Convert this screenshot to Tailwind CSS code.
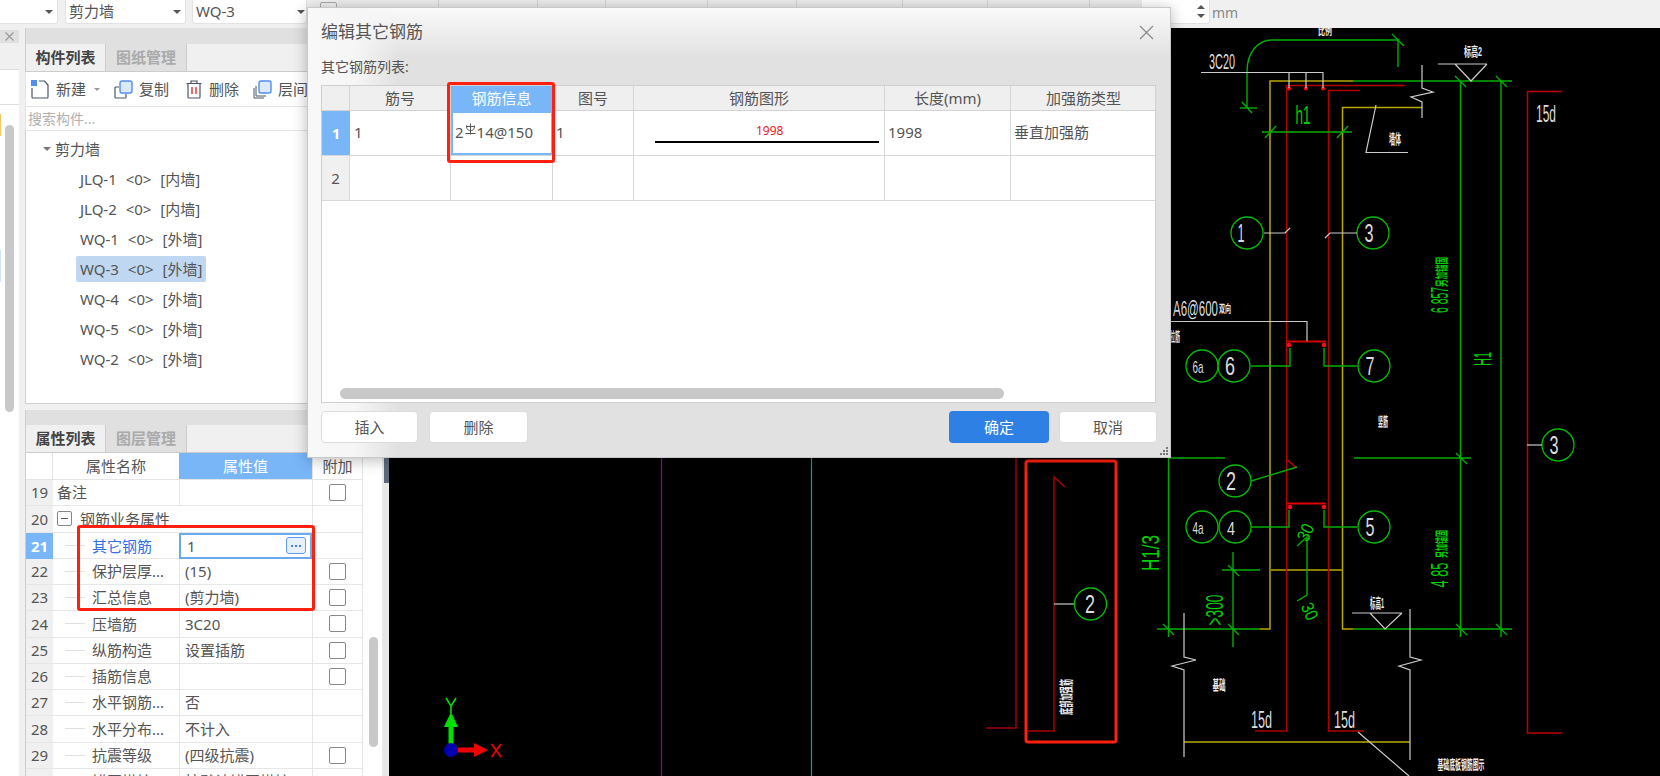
<!DOCTYPE html>
<html lang="zh">
<head>
<meta charset="UTF-8">
<title>编辑其它钢筋</title>
<script src="https://cdn.jsdelivr.net/npm/@tailwindcss/browser@4"></script>
</head>
<body class="bg-[#f0f0f0]">
<div class="relative w-[1660px] h-[776px] overflow-hidden flex flex-col bg-[#f0f0f0] text-[15px] text-[#555] font-['Noto_Sans','Noto_Sans_CJK_SC',sans-serif]">

  <!-- top bar -->
  <div class="h-[28px] shrink-0 flex items-start bg-[#f0f0f0]">
    <div class="w-[58px] h-[24px] bg-white rounded-br-[4px] border-r border-b border-[#e2e2e2] flex items-center justify-end pr-[4px]">
      <span class="w-0 h-0 border-x-[4px] border-x-transparent border-t-[4px] border-t-[#555]"></span>
    </div>
    <div class="ml-[7px] w-[121px] h-[24px] bg-white rounded-b-[4px] border border-t-0 border-[#e2e2e2] flex items-center justify-between pl-[3px] pr-[4px]">
      <span>剪力墙</span>
      <span class="w-0 h-0 border-x-[4px] border-x-transparent border-t-[4px] border-t-[#555]"></span>
    </div>
    <div class="ml-[6px] w-[115px] h-[24px] bg-white rounded-b-[4px] border border-t-0 border-[#e2e2e2] flex items-center justify-between pl-[3px] pr-[1px]">
      <span>WQ-3</span>
      <span class="w-0 h-0 border-x-[4px] border-x-transparent border-t-[4px] border-t-[#555]"></span>
    </div>
    <div class="ml-[13px] w-[17px] h-[10px] mt-[2px] border border-[#aaa] rounded-[2px]"></div>
    <div class="ml-[1px] w-[101px] h-[24px] bg-[#ececec] border-r border-[#d4d4d4]"></div>
    <div class="w-[99px] h-[24px] bg-[#ececec] border-r border-[#d4d4d4]"></div>
    <div class="w-[68px] h-[24px] bg-[#ececec] border-r border-[#d4d4d4]"></div>
    <div class="w-[102px] h-[24px] bg-[#ececec] border-r border-[#d4d4d4]"></div>
    <div class="w-[89px] h-[24px] bg-[#ececec] border-r border-[#d4d4d4]"></div>
    <div class="w-[106px] h-[24px] bg-[#ececec] border-r border-[#d4d4d4]"></div>
    <div class="w-[85px] h-[24px] bg-[#ececec] border-r border-[#d4d4d4]"></div>
    <div class="w-[102px] h-[24px] bg-[#ececec] border-r border-[#d4d4d4]"></div>
    <div class="w-[52px] h-[24px] bg-[#ececec]"></div>
    <div class="w-[68px] h-[24px] bg-white rounded-br-[4px] border-r border-b border-[#e2e2e2] flex flex-col items-end justify-center gap-[5px] pr-[4px]">
      <span class="w-0 h-0 border-x-[4px] border-x-transparent border-b-[4px] border-b-[#555]"></span>
      <span class="w-0 h-0 border-x-[4px] border-x-transparent border-t-[4px] border-t-[#555]"></span>
    </div>
    <span class="ml-[2px] mt-[2px] text-[14px] text-[#888]">mm</span>
  </div>

  <div class="flex flex-1 min-h-0">
    <!-- left strip -->
    <div class="w-[19px] shrink-0 flex flex-col bg-white">
      <div class="h-[2px] bg-[#f0f0f0]"></div>
      <div class="h-[13px] bg-[#e0e0e0] flex items-center justify-end pr-[5px]">
        <svg width="9" height="9" viewBox="0 0 9 9"><path d="M0.5 0.5L8.5 8.5M8.5 0.5L0.5 8.5" stroke="#999" stroke-width="1.2" fill="none"/></svg>
      </div>
      <div class="h-[27px] bg-[#f0f0f0] border-b border-[#ddd]"></div>
      <div class="h-[35px] border-b border-[#ddd]"></div>
      <div class="relative flex-1">
        <div class="absolute left-0 top-[9px] w-px h-[22px] bg-[#f5c766]"></div>
        <div class="absolute left-0 top-[145px] w-px h-[32px] bg-[#cfe4fa]"></div>
        <div class="ml-[5px] mt-[20px] w-[9px] h-[287px] rounded-[5px] bg-[#c8c8c8]"></div>
      </div>
    </div>
    <div class="w-[6px] shrink-0 bg-[#f0f0f0]"></div>

    <!-- component + property panels -->
    <div class="w-[357px] shrink-0 flex flex-col">
      <div class="h-[16px] bg-[#e0e0e0] border-l border-[#ccc]"></div>
      <div class="h-[28px] flex border-l border-b border-[#ccc] bg-[#f0f0f0]">
        <div class="w-[80px] flex items-center justify-center font-bold text-[#444] border-r border-[#ccc]">构件列表</div>
        <div class="w-[81px] flex items-center justify-center font-bold text-[#aaa] bg-[#e0e0e0] border-r border-[#ccc]">图纸管理</div>
      </div>
      <div class="h-[35px] bg-white border-l border-b border-[#e4e4e4] flex items-center text-[#555]">
        <svg class="ml-[5px]" width="19" height="19" viewBox="0 0 19 19" fill="none"><path d="M1 8V17a1 1 0 0 0 1 1H16a1 1 0 0 0 1-1V5L13.500 1H8" stroke="#4a5568" stroke-width="1.200"/><rect x="0" y="0" width="6" height="6" fill="#4f8fef"/></svg>
        <span class="ml-[6px]">新建</span>
        <span class="ml-[8px] w-0 h-0 border-x-[3px] border-x-transparent border-t-[3px] border-t-[#999]"></span>
        <svg class="ml-[14px]" width="19" height="19" viewBox="0 0 19 19" fill="none"><path d="M5 7H2a1 1 0 0 0-1 1V17a1 1 0 0 0 1 1H11a1 1 0 0 0 1-1V14" stroke="#4a5568" stroke-width="1.200"/><rect x="6" y="1" width="12" height="12" rx="2" fill="#dce9fb" stroke="#4f8fef" stroke-width="1.400"/></svg>
        <span class="ml-[6px]">复制</span>
        <svg class="ml-[17px]" width="16" height="19" viewBox="0 0 16 19" fill="none"><path d="M2 4V17a1 1 0 0 0 1 1H13a1 1 0 0 0 1-1V4M0.500 3.500H15.500M5 3.500V1H11V3.500" stroke="#4a5568" stroke-width="1.200"/><path d="M6 7V14M10 7V14" stroke="#e03030" stroke-width="1.400"/></svg>
        <span class="ml-[7px]">删除</span>
        <svg class="ml-[14px]" width="19" height="19" viewBox="0 0 19 19" fill="none"><path d="M3 6V16H13M1 8V18H11" stroke="#4a5568" stroke-width="1"/><rect x="6" y="1" width="12" height="12" rx="2" fill="#dce9fb" stroke="#4f8fef" stroke-width="1.400"/></svg>
        <span class="ml-[6px]">层间</span>
      </div>
      <div class="h-[24px] bg-white border-l border-b border-[#e4e4e4] flex items-center pl-[2px] text-[14px] text-[#b0b0b0]">搜索构件...</div>
      <div class="h-[273px] bg-white border-l border-b border-[#d0d0d0] pt-[3px] text-[#555]">
        <div class="h-[30px] flex items-center pl-[17px]">
          <span class="w-0 h-0 border-x-[4px] border-x-transparent border-t-[4px] border-t-[#777]"></span>
          <span class="ml-[4px]">剪力墙</span>
        </div>
        <div class="h-[30px] flex items-center pl-[50px] [word-spacing:5px]"><span class="h-[26px] leading-[26px] px-[4px] rounded-[2px]">JLQ-1 &lt;0&gt; [内墙]</span></div>
        <div class="h-[30px] flex items-center pl-[50px] [word-spacing:5px]"><span class="h-[26px] leading-[26px] px-[4px] rounded-[2px]">JLQ-2 &lt;0&gt; [内墙]</span></div>
        <div class="h-[30px] flex items-center pl-[50px] [word-spacing:5px]"><span class="h-[26px] leading-[26px] px-[4px] rounded-[2px]">WQ-1 &lt;0&gt; [外墙]</span></div>
        <div class="h-[30px] flex items-center pl-[50px] [word-spacing:5px]"><span class="h-[26px] leading-[26px] px-[4px] rounded-[2px] bg-[#bfd7f0]">WQ-3 &lt;0&gt; [外墙]</span></div>
        <div class="h-[30px] flex items-center pl-[50px] [word-spacing:5px]"><span class="h-[26px] leading-[26px] px-[4px] rounded-[2px]">WQ-4 &lt;0&gt; [外墙]</span></div>
        <div class="h-[30px] flex items-center pl-[50px] [word-spacing:5px]"><span class="h-[26px] leading-[26px] px-[4px] rounded-[2px]">WQ-5 &lt;0&gt; [外墙]</span></div>
        <div class="h-[30px] flex items-center pl-[50px] [word-spacing:5px]"><span class="h-[26px] leading-[26px] px-[4px] rounded-[2px]">WQ-2 &lt;0&gt; [外墙]</span></div>
      </div>
      <div class="h-[6px]"></div>
      <div class="h-[15px] bg-[#e0e0e0] border-l border-[#ccc]"></div>
      <div class="h-[28px] flex border-l border-b border-[#ccc] bg-[#f0f0f0]">
        <div class="w-[80px] flex items-center justify-center font-bold text-[#444] border-r border-[#ccc]">属性列表</div>
        <div class="w-[81px] flex items-center justify-center font-bold text-[#aaa] bg-[#e0e0e0] border-r border-[#ccc]">图层管理</div>
      </div>
      <div class="flex flex-1 min-h-0 bg-white border-l border-[#ccc]">
        <div class="w-[336px] shrink-0 flex flex-col">
          <div class="h-[27px] shrink-0 grid grid-cols-[27px_126px_133px_50px] border-b border-[#e4e4e4]">
            <div class="border-r border-[#e4e4e4]"></div>
            <div class="flex items-center justify-center">属性名称</div>
            <div class="flex items-center justify-center bg-[#78b6f8] text-white">属性值</div>
            <div class="flex items-center justify-center border-l border-[#e4e4e4]">附加</div>
          </div>

          <div class="h-[26.25px] shrink-0 grid grid-cols-[27px_126px_133px_50px] border-b border-[#e6e6e6]">
            <div class="flex items-center justify-center bg-[#f0f0f0]">19</div>
            <div class="flex items-center pl-[4px]">备注</div>
            <div class="border-l border-[#e6e6e6]"></div>
            <div class="flex items-center justify-center border-l border-[#e6e6e6]"><span class="w-[17px] h-[17px] rounded-[2px] border border-[#888]"></span></div>
          </div>
          <div class="h-[26.25px] shrink-0 grid grid-cols-[27px_126px_133px_50px] border-b border-[#e6e6e6]">
            <div class="flex items-center justify-center bg-[#f0f0f0]">20</div>
            <div class="flex items-center pl-[4px]"><span class="w-[15px] h-[15px] rounded-[2px] border border-[#888] flex items-center justify-center"><span class="w-[7px] h-px bg-[#555]"></span></span><span class="ml-[8px]">钢筋业务属性</span></div>
            <div class=""></div>
            <div class="border-l border-[#e6e6e6]"></div>
          </div>
          <div class="h-[26.25px] shrink-0 grid grid-cols-[27px_126px_133px_50px] border-b border-[#e6e6e6]">
            <div class="flex items-center justify-center bg-[#78b6f8] text-white font-bold">21</div>
            <div class="flex items-center"><span class="ml-[12px] mr-[7px] w-[20px] h-px bg-[#e0e0e0]"></span><span class="text-[#2f6fe8]">其它钢筋</span></div>
            <div class="flex items-center justify-between pl-[6px] pr-[4px] border-2 border-[#6aa8f0] bg-white"><span>1</span><span class="w-[20px] h-[17px] rounded-[3px] border border-[#5b9bf0] bg-[#e8f0fb] flex items-center justify-center gap-[2px]"><span class="w-[2px] h-[2px] bg-[#3f7fe0]"></span><span class="w-[2px] h-[2px] bg-[#3f7fe0]"></span><span class="w-[2px] h-[2px] bg-[#3f7fe0]"></span></span></div>
            <div class="border-l border-[#e6e6e6]"></div>
          </div>
          <div class="h-[26.25px] shrink-0 grid grid-cols-[27px_126px_133px_50px] border-b border-[#e6e6e6]">
            <div class="flex items-center justify-center bg-[#f0f0f0]">22</div>
            <div class="flex items-center"><span class="ml-[12px] mr-[7px] w-[20px] h-px bg-[#e0e0e0]"></span><span>保护层厚...</span></div>
            <div class="flex items-center pl-[5px] border-l border-[#e6e6e6]">(15)</div>
            <div class="flex items-center justify-center border-l border-[#e6e6e6]"><span class="w-[17px] h-[17px] rounded-[2px] border border-[#888]"></span></div>
          </div>
          <div class="h-[26.25px] shrink-0 grid grid-cols-[27px_126px_133px_50px] border-b border-[#e6e6e6]">
            <div class="flex items-center justify-center bg-[#f0f0f0]">23</div>
            <div class="flex items-center"><span class="ml-[12px] mr-[7px] w-[20px] h-px bg-[#e0e0e0]"></span><span>汇总信息</span></div>
            <div class="flex items-center pl-[5px] border-l border-[#e6e6e6]">(剪力墙)</div>
            <div class="flex items-center justify-center border-l border-[#e6e6e6]"><span class="w-[17px] h-[17px] rounded-[2px] border border-[#888]"></span></div>
          </div>
          <div class="h-[26.25px] shrink-0 grid grid-cols-[27px_126px_133px_50px] border-b border-[#e6e6e6]">
            <div class="flex items-center justify-center bg-[#f0f0f0]">24</div>
            <div class="flex items-center"><span class="ml-[12px] mr-[7px] w-[20px] h-px bg-[#e0e0e0]"></span><span>压墙筋</span></div>
            <div class="flex items-center pl-[5px] border-l border-[#e6e6e6]">3C20</div>
            <div class="flex items-center justify-center border-l border-[#e6e6e6]"><span class="w-[17px] h-[17px] rounded-[2px] border border-[#888]"></span></div>
          </div>
          <div class="h-[26.25px] shrink-0 grid grid-cols-[27px_126px_133px_50px] border-b border-[#e6e6e6]">
            <div class="flex items-center justify-center bg-[#f0f0f0]">25</div>
            <div class="flex items-center"><span class="ml-[12px] mr-[7px] w-[20px] h-px bg-[#e0e0e0]"></span><span>纵筋构造</span></div>
            <div class="flex items-center pl-[5px] border-l border-[#e6e6e6]">设置插筋</div>
            <div class="flex items-center justify-center border-l border-[#e6e6e6]"><span class="w-[17px] h-[17px] rounded-[2px] border border-[#888]"></span></div>
          </div>
          <div class="h-[26.25px] shrink-0 grid grid-cols-[27px_126px_133px_50px] border-b border-[#e6e6e6]">
            <div class="flex items-center justify-center bg-[#f0f0f0]">26</div>
            <div class="flex items-center"><span class="ml-[12px] mr-[7px] w-[20px] h-px bg-[#e0e0e0]"></span><span>插筋信息</span></div>
            <div class="border-l border-[#e6e6e6]"></div>
            <div class="flex items-center justify-center border-l border-[#e6e6e6]"><span class="w-[17px] h-[17px] rounded-[2px] border border-[#888]"></span></div>
          </div>
          <div class="h-[26.25px] shrink-0 grid grid-cols-[27px_126px_133px_50px] border-b border-[#e6e6e6]">
            <div class="flex items-center justify-center bg-[#f0f0f0]">27</div>
            <div class="flex items-center"><span class="ml-[12px] mr-[7px] w-[20px] h-px bg-[#e0e0e0]"></span><span>水平钢筋...</span></div>
            <div class="flex items-center pl-[5px] border-l border-[#e6e6e6]">否</div>
            <div class="border-l border-[#e6e6e6]"></div>
          </div>
          <div class="h-[26.25px] shrink-0 grid grid-cols-[27px_126px_133px_50px] border-b border-[#e6e6e6]">
            <div class="flex items-center justify-center bg-[#f0f0f0]">28</div>
            <div class="flex items-center"><span class="ml-[12px] mr-[7px] w-[20px] h-px bg-[#e0e0e0]"></span><span>水平分布...</span></div>
            <div class="flex items-center pl-[5px] border-l border-[#e6e6e6]">不计入</div>
            <div class="border-l border-[#e6e6e6]"></div>
          </div>
          <div class="h-[26.25px] shrink-0 grid grid-cols-[27px_126px_133px_50px] border-b border-[#e6e6e6]">
            <div class="flex items-center justify-center bg-[#f0f0f0]">29</div>
            <div class="flex items-center"><span class="ml-[12px] mr-[7px] w-[20px] h-px bg-[#e0e0e0]"></span><span>抗震等级</span></div>
            <div class="flex items-center pl-[5px] border-l border-[#e6e6e6]">(四级抗震)</div>
            <div class="flex items-center justify-center border-l border-[#e6e6e6]"><span class="w-[17px] h-[17px] rounded-[2px] border border-[#888]"></span></div>
          </div>
          <div class="h-[26.25px] shrink-0 grid grid-cols-[27px_126px_133px_50px] border-b border-[#e6e6e6]">
            <div class="flex items-center justify-center bg-[#f0f0f0]">30</div>
            <div class="flex items-center"><span class="ml-[12px] mr-[7px] w-[20px] h-px bg-[#e0e0e0]"></span><span>锚固搭接</span></div>
            <div class="flex items-center pl-[5px] border-l border-[#e6e6e6]">按默认锚固搭接</div>
            <div class="border-l border-[#e6e6e6]"></div>
          </div>
        </div>
        <div class="flex-1 border-l border-[#e4e4e4]">
          <div class="ml-[6px] mt-[184px] w-[9px] h-[110px] rounded-[5px] bg-[#c8c8c8]"></div>
        </div>
      </div>
    </div>

    <!-- splitter -->
    <div class="w-[7px] shrink-0 bg-[#e8e8e8]">
      <div class="mt-[430px] ml-[2px] h-[25px] bg-[#5c6b7a]"></div>
    </div>

    <!-- drawing canvas -->
    <div class="flex-1 bg-black">
      <svg width="1271" height="748" viewBox="389 28 1271 748" fill="none" font-family="Liberation Sans, Noto Sans CJK SC, sans-serif">
        <path d="M661.500 458V776" stroke="#a000a0" stroke-width="1.200"/>
        <path d="M811.500 458V776" stroke="#00a5a5" stroke-width="1.200"/>

        <!-- axis -->
        <path d="M451 750V727" stroke="#00e000" stroke-width="5"/>
        <path d="M451 712L458 727H444Z" fill="#00e000"/>
        <path d="M451 750H474" stroke="#f00000" stroke-width="5"/>
        <path d="M488 750L474 743V757Z" fill="#f00000"/>
        <circle cx="451" cy="750" r="7" fill="#0000b0"/>
        <path d="M446 698L451 706L456 698M451 706V713" stroke="#00e000" stroke-width="1.600"/>
        <path d="M491.500 744L501 757M501 744L491.500 757" stroke="#f00000" stroke-width="1.800"/>

        <!-- dark red rebar left of the highlighted one -->
        <path d="M1016 458V728H986" stroke="#a00000" stroke-width="1.500"/>
        <path d="M1065 487L1054 477V731H1028" stroke="#a80000" stroke-width="1.500"/>
        <path d="M1054 604H1074" stroke="#ccc" stroke-width="1.200"/>
        <circle cx="1090.500" cy="604" r="16" stroke="#00c000" stroke-width="1.300"/>
        <text x="1090" y="613" fill="#ddd" font-size="25" text-anchor="middle" textLength="10" lengthAdjust="spacingAndGlyphs">2</text>
        <text transform="translate(1071 697) rotate(-90)" fill="#eee" font-size="14" font-weight="bold" text-anchor="middle" textLength="36" lengthAdjust="spacingAndGlyphs">底部加强筋</text>

        <!-- wall outline, yellow -->
        <path d="M1353 81H1270V629H1260" stroke="#b8a800" stroke-width="1.500"/>
        <path d="M1422 107.500H1342.500V629H1353" stroke="#b8a800" stroke-width="1.500"/>
        <path d="M1271 570H1342" stroke="#b8a800" stroke-width="1.500"/>
        <path d="M1184 742H1410" stroke="#8c8000" stroke-width="1.800"/>

        <!-- rebar, red -->
        <path d="M1405 85.500H1286.500V731H1255" stroke="#b00000" stroke-width="1.500"/>
        <path d="M1360 90.500H1328.500V731H1364" stroke="#b00000" stroke-width="1.500"/>
        <path d="M1562 91.500H1527.500V733H1562" stroke="#c00000" stroke-width="1.500"/>
        <circle cx="1289" cy="88.500" r="2" fill="#ff1010"/>
        <circle cx="1306" cy="88.500" r="2" fill="#ff1010"/>
        <circle cx="1323" cy="88.500" r="2" fill="#ff1010"/>
        <path d="M1287 341.500H1326" stroke="#d00000" stroke-width="2"/>
        <path d="M1287 503.500H1326" stroke="#e00000" stroke-width="2"/>
        <circle cx="1289" cy="345" r="2.200" fill="#ff1010"/>
        <circle cx="1324" cy="345" r="2.200" fill="#ff1010"/>
        <circle cx="1290" cy="507" r="2.200" fill="#ff1010"/>
        <circle cx="1324" cy="507" r="2.200" fill="#ff1010"/>
        <path d="M1286 459L1297 468" stroke="#d00000" stroke-width="1.300"/>

        <!-- dimension lines, green -->
        <g stroke="#00b000" stroke-width="1.400">
          <path d="M1353 81H1512"/>
          <path d="M1460.500 81V637M1501 81V637"/>
          <path d="M1247 107V72C1247 52 1258 40 1272 40H1398V67"/>
          <path d="M1240 108H1257"/>
          <path d="M1262 132H1352"/>
          <path d="M1168.500 458V637M1168 458H1225"/>
          <path d="M1157 629H1260M1353 629H1512"/>
          <path d="M1354 458H1471"/>
          <path d="M1233 552V647M1222 570H1260"/>
          <path d="M1297 546L1307 537V595L1297 601"/>
          <path d="M1290 348V366H1251M1324 348V366H1357"/>
          <path d="M1289 510V527H1251M1324 510V527H1357"/>
          <path d="M1251 481L1297 467"/>
          <path d="M1392 34L1404 46M1242 102L1252 113M1265 138L1276 126M1337 138L1348 126M1455 76L1466 87M1496 76L1507 87M1163 624L1174 635M1228 624L1239 635M1228 565L1239 576M1456 624L1467 635M1496 624L1507 635M1456 453L1467 464"/>
        </g>

        <!-- callout circles -->
        <g stroke="#00c000" stroke-width="1.300">
          <circle cx="1247" cy="233" r="16"/>
          <circle cx="1373" cy="233" r="16"/>
          <circle cx="1234" cy="366" r="16"/>
          <circle cx="1202" cy="366" r="16"/>
          <circle cx="1374" cy="366" r="16"/>
          <circle cx="1235" cy="481" r="16"/>
          <circle cx="1235" cy="527" r="16"/>
          <circle cx="1202" cy="527" r="16"/>
          <circle cx="1374" cy="527" r="16"/>
          <circle cx="1558" cy="445" r="16"/>
        </g>
        <g fill="#ddd" font-size="25" text-anchor="middle">
          <text x="1241" y="242" textLength="7" lengthAdjust="spacingAndGlyphs">1</text>
          <text x="1369" y="242" textLength="9" lengthAdjust="spacingAndGlyphs">3</text>
          <text x="1230" y="375" textLength="10" lengthAdjust="spacingAndGlyphs">6</text>
          <text x="1370" y="375" textLength="9" lengthAdjust="spacingAndGlyphs">7</text>
          <text x="1231" y="490" textLength="10" lengthAdjust="spacingAndGlyphs">2</text>
          <text x="1231" y="535" font-size="19" textLength="8" lengthAdjust="spacingAndGlyphs">4</text>
          <text x="1370" y="536" textLength="9" lengthAdjust="spacingAndGlyphs">5</text>
          <text x="1554" y="454" textLength="9" lengthAdjust="spacingAndGlyphs">3</text>
          <text x="1198" y="373" font-size="17" textLength="11" lengthAdjust="spacingAndGlyphs">6a</text>
          <text x="1198" y="534" font-size="17" textLength="11" lengthAdjust="spacingAndGlyphs">4a</text>
        </g>

        <!-- white annotations -->
        <g stroke="#ccc" stroke-width="1.200">
          <path d="M1201 72.500H1323M1289 72V88M1306 72V88M1323 72V88"/>
          <path d="M1422 65V88L1433 92L1411 97L1422 102V118"/>
          <path d="M1438 64H1487M1455 64L1471 81L1487 64"/>
          <path d="M1376 105L1366 152.500H1408"/>
          <path d="M1264 233H1285L1290 228M1357 233H1330L1325 238"/>
          <path d="M1171 321.500H1307V341"/>
          <path d="M1527 445H1542"/>
          <path d="M1352 613H1402M1370 613L1385 629L1402 613"/>
          <path d="M1184 613V657L1196 660L1172 666L1184 670V757"/>
          <path d="M1410 609V657L1421 660L1399 666L1410 670V760"/>
          <path d="M1358 732L1409 776"/>
        </g>
        <g fill="#ddd" font-size="22">
          <text x="1209" y="69" textLength="26" lengthAdjust="spacingAndGlyphs">3C20</text>
          <text x="1536" y="122" font-size="24" textLength="20" lengthAdjust="spacingAndGlyphs">15d</text>
          <text x="1251" y="728" font-size="24" textLength="21" lengthAdjust="spacingAndGlyphs">15d</text>
          <text x="1334" y="728" font-size="24" textLength="21" lengthAdjust="spacingAndGlyphs">15d</text>
          <text x="1173" y="316" textLength="45" lengthAdjust="spacingAndGlyphs">A6@600</text>
        </g>
        <g fill="#eee" font-size="11" font-weight="bold" text-anchor="middle">
          <text x="1325" y="35" textLength="14" lengthAdjust="spacingAndGlyphs">比例</text>
          <text x="1473" y="56" font-size="13" textLength="18" lengthAdjust="spacingAndGlyphs">标高2</text>
          <text x="1395" y="144" font-size="14" textLength="12" lengthAdjust="spacingAndGlyphs">墙体</text>
          <text x="1225" y="313" textLength="12" lengthAdjust="spacingAndGlyphs">双向</text>
          <text x="1175" y="341" font-size="13" textLength="10" lengthAdjust="spacingAndGlyphs">拉筋</text>
          <text x="1383" y="426" font-size="13" textLength="10" lengthAdjust="spacingAndGlyphs">竖筋</text>
          <text x="1377" y="608" font-size="14" textLength="14" lengthAdjust="spacingAndGlyphs">标高1</text>
          <text x="1219" y="690" font-size="14" textLength="13" lengthAdjust="spacingAndGlyphs">基础</text>
          <text x="1461" y="769" font-size="13" textLength="47" lengthAdjust="spacingAndGlyphs">基础底板钢筋图示</text>
        </g>

        <!-- green labels -->
        <g fill="#00d000" text-anchor="middle">
          <text x="1303" y="124" font-size="25" textLength="15" lengthAdjust="spacingAndGlyphs">h1</text>
          <text transform="translate(1491 359) rotate(-90)" font-size="24" textLength="14" lengthAdjust="spacingAndGlyphs">H1</text>
          <text transform="translate(1159 553) rotate(-90)" font-size="24" textLength="36" lengthAdjust="spacingAndGlyphs">H1/3</text>
          <text transform="translate(1223 610) rotate(-90)" font-size="24" textLength="31" lengthAdjust="spacingAndGlyphs">&gt;300</text>
          <text transform="translate(1311 535) rotate(-65)" font-size="18" textLength="17" lengthAdjust="spacingAndGlyphs">30</text>
          <text transform="translate(1304 614) rotate(65)" font-size="18" textLength="17" lengthAdjust="spacingAndGlyphs">30</text>
          <text transform="translate(1448 300) rotate(-90)" font-size="23" textLength="26" lengthAdjust="spacingAndGlyphs">6 857</text>
          <text transform="translate(1446 272) rotate(-90)" font-size="13" font-weight="bold" textLength="30" lengthAdjust="spacingAndGlyphs">另加锚固</text>
          <text transform="translate(1448 575) rotate(-90)" font-size="23" textLength="25" lengthAdjust="spacingAndGlyphs">4 85</text>
          <text transform="translate(1446 544) rotate(-90)" font-size="13" font-weight="bold" textLength="28" lengthAdjust="spacingAndGlyphs">另加锚固</text>
        </g>

        <!-- red highlight -->
        <rect x="1026" y="461" width="90" height="281" rx="2" stroke="#ff2010" stroke-width="3"/>
      </svg>
    </div>
  </div>

  <!-- highlight over the property rows -->
  <div class="absolute left-[77px] top-[525px] w-[238px] h-[86px] border-[3px] border-[#ff2010] rounded-[3px] z-10"></div>

  <!-- dialog -->
  <div class="absolute left-[307px] top-[7px] w-[864px] h-[451px] bg-[#e1e1e1] border border-[#c8c8c8] shadow-[0_2px_14px_rgba(0,0,0,0.28)] z-20">
    <div class="absolute inset-x-0 top-0 h-[50px] bg-linear-to-b from-[#fafafa] to-transparent"></div>
    <div class="absolute inset-y-0 left-0 w-[90px] bg-linear-to-r from-[#f8f8f8] via-[#f6f6f6] to-transparent"></div>

    <div class="relative h-full px-[13px] flex flex-col">
      <div class="h-[48px] flex items-center justify-between">
        <span class="text-[17px] text-[#555]">编辑其它钢筋</span>
        <svg class="mr-[3px]" width="15" height="15" viewBox="0 0 15 15"><path d="M1 1L14 14M14 1L1 14" stroke="#8a8a8a" stroke-width="1.200" fill="none"/></svg>
      </div>
      <div class="h-[29px] flex items-start text-[14px] text-[#555]">其它钢筋列表:</div>

      <div class="relative w-[835px] h-[318px] bg-white border border-[#cfcfcf]">
        <div class="grid grid-cols-[28px_101px_102px_81px_251px_126px_145px] h-[25px] bg-[#efefef] border-b border-[#d4d4d4] text-center leading-[25px]">
          <div class="border-r border-[#d4d4d4]"></div>
          <div class="border-r border-[#d4d4d4]">筋号</div>
          <div class="border-r border-[#d4d4d4] bg-[#78b6f8] text-white">钢筋信息</div>
          <div class="border-r border-[#d4d4d4]">图号</div>
          <div class="border-r border-[#d4d4d4]">钢筋图形</div>
          <div class="border-r border-[#d4d4d4]">长度(mm)</div>
          <div>加强筋类型</div>
        </div>
        <div class="grid grid-cols-[28px_101px_102px_81px_251px_126px_145px] h-[45px] border-b border-[#d8d8d8]">
          <div class="flex items-center justify-center bg-[#78b6f8] text-white font-bold">1</div>
          <div class="pl-[4px] pt-[10px] border-r border-[#d8d8d8]">1</div>
          <div class="border-2 border-[#7ab5f5] flex items-start pt-[8px] pl-[2px]">
            <span>2</span>
            <svg class="mt-[2px] mx-[1px]" width="11" height="12" viewBox="0 0 11 12" fill="none" stroke="#555" stroke-width="1"><path d="M5.500 0.500V11.500M1.500 2.500C1.500 7 3.500 7.500 5.500 7.500C7.500 7.500 9.500 7 9.500 2.500M1.500 3.500H9.500M0.500 10.500H10.500"/></svg>
            <span>14@150</span>
          </div>
          <div class="pl-[3px] pt-[10px] border-r border-[#d8d8d8]">1</div>
          <div class="flex flex-col items-start pt-[13px] border-r border-[#d8d8d8]">
            <span class="ml-[122px] text-[12px] leading-[14px] text-[#f02020]">1998</span>
            <span class="ml-[21px] mt-[3px] w-[224px] h-[2px] bg-black"></span>
          </div>
          <div class="pl-[3px] pt-[10px] border-r border-[#d8d8d8]">1998</div>
          <div class="pl-[3px] pt-[10px]">垂直加强筋</div>
        </div>
        <div class="grid grid-cols-[28px_101px_102px_81px_251px_126px_145px] h-[45px] border-b border-[#d8d8d8]">
          <div class="flex items-center justify-center bg-[#f0f0f0] border-r border-[#d8d8d8]">2</div>
          <div class="border-r border-[#d8d8d8]"></div>
          <div class="border-r border-[#d8d8d8]"></div>
          <div class="border-r border-[#d8d8d8]"></div>
          <div class="border-r border-[#d8d8d8]"></div>
          <div class="border-r border-[#d8d8d8]"></div>
          <div></div>
        </div>
        <div class="absolute left-[18px] bottom-[3px] w-[664px] h-[11px] rounded-[6px] bg-[#c8c8c8]"></div>
      </div>

      <div class="mt-[8px] flex items-start">
        <button class="w-[97px] h-[32px] rounded-[4px] bg-white border border-[#dcdcdc] text-[#555]">插入</button>
        <button class="ml-[11px] w-[99px] h-[32px] rounded-[4px] bg-white border border-[#dcdcdc] text-[#555]">删除</button>
        <button class="ml-auto w-[100px] h-[32px] rounded-[4px] bg-[#2f80e4] text-white">确定</button>
        <button class="ml-[10px] w-[98px] h-[32px] rounded-[4px] bg-white border border-[#dcdcdc] text-[#555]">取消</button>
      </div>
    </div>

    <svg class="absolute right-[1px] bottom-[1px]" width="10" height="10" viewBox="0 0 10 10" fill="#777"><rect x="7" y="1" width="2" height="2"/><rect x="4" y="4" width="2" height="2"/><rect x="7" y="4" width="2" height="2"/><rect x="1" y="7" width="2" height="2"/><rect x="4" y="7" width="2" height="2"/><rect x="7" y="7" width="2" height="2"/></svg>
  </div>

  <!-- highlight over the dialog grid column -->
  <div class="absolute left-[447px] top-[82px] w-[108px] h-[81px] border-[3px] border-[#ff2010] rounded-[3px] z-30"></div>
</div>
</body>
</html>
